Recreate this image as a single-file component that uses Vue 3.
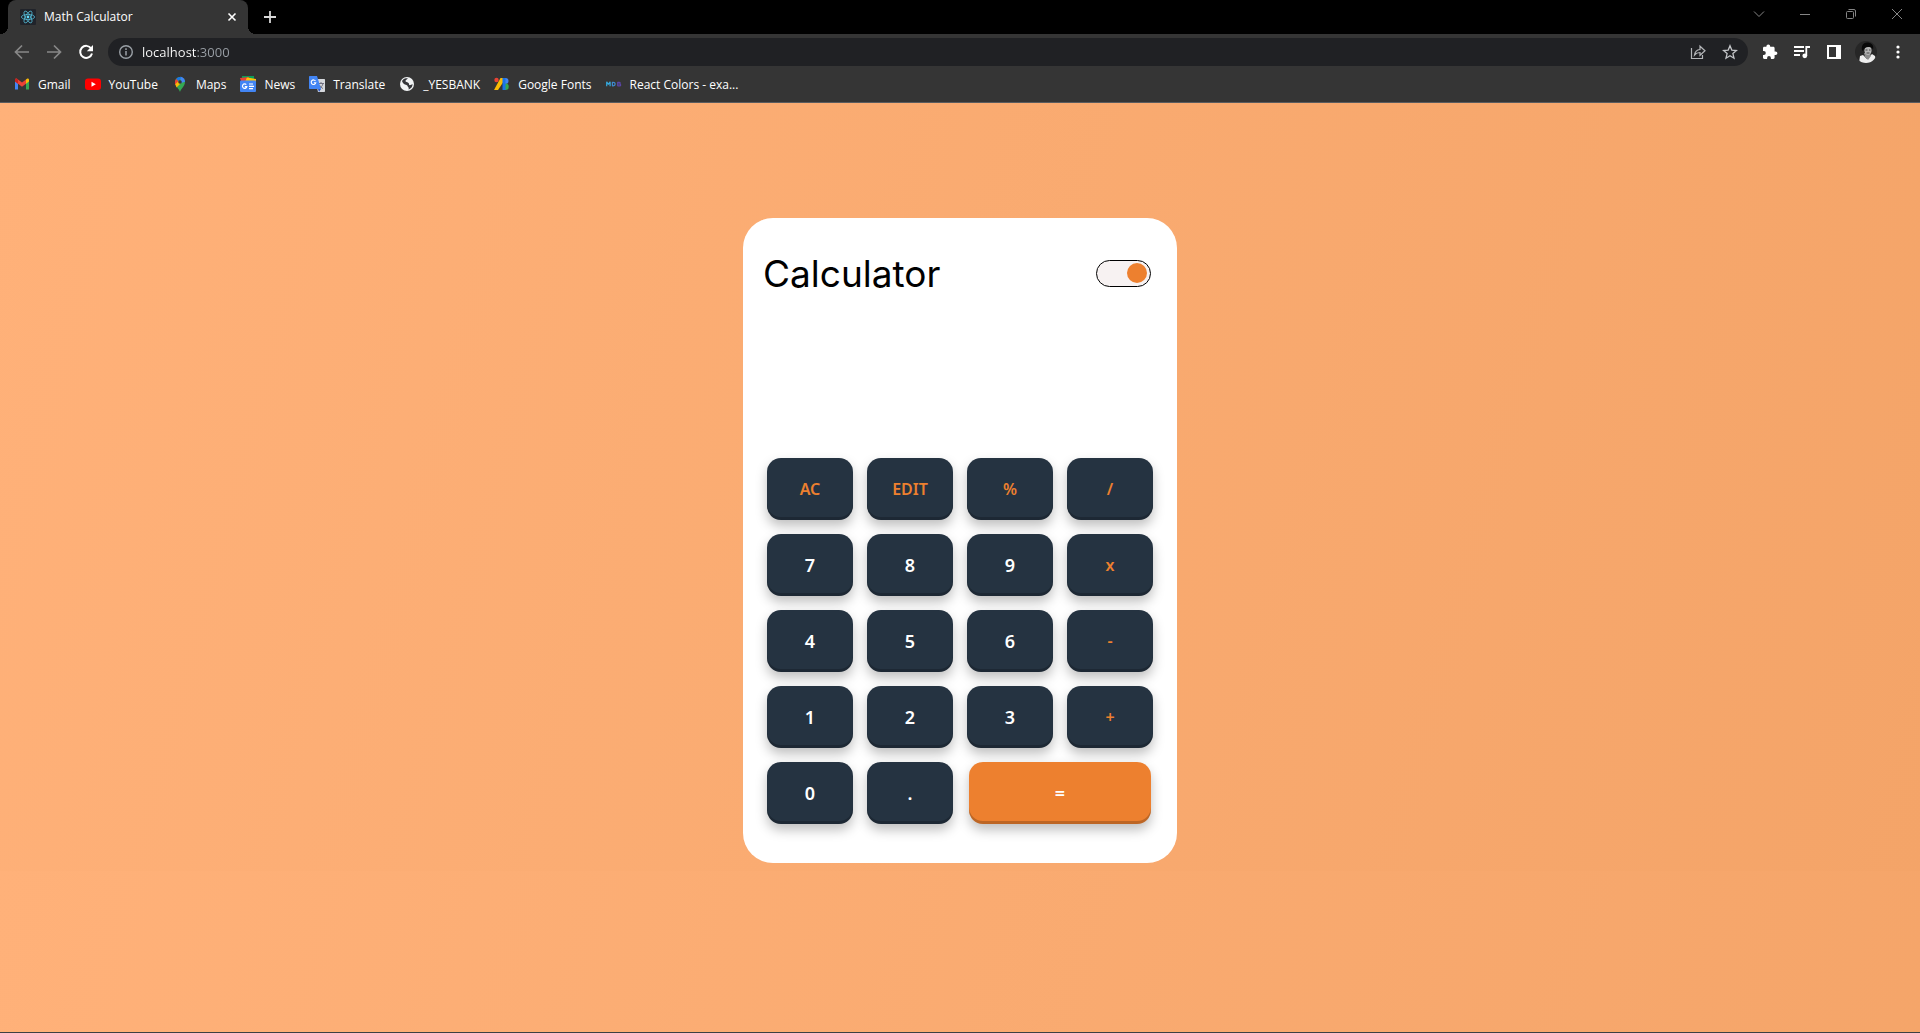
<script setup>
import { ref, computed } from 'vue'

const bookmarks = ['Gmail', 'YouTube', 'Maps', 'News', 'Translate', '_YESBANK', 'Google Fonts', 'React Colors - exa...']

const keys = [
  ['AC', 'op'], ['EDIT', 'op'], ['%', 'op'], ['/', 'op'],
  ['7', 'num'], ['8', 'num'], ['9', 'num'], ['x', 'op'],
  ['4', 'num'], ['5', 'num'], ['6', 'num'], ['-', 'op'],
  ['1', 'num'], ['2', 'num'], ['3', 'num'], ['+', 'op'],
  ['0', 'num'], ['.', 'num'], ['=', 'equals']
].map(([label, kind]) => ({ label, kind }))

const address = ref('localhost:3000')
const light = ref(true)
const entry = ref('')
const left = ref(0)
const pending = ref('')
const shown = computed(() => entry.value)

const apply = (a, b, op) => {
  if (op === '+') return a + b
  if (op === '-') return a - b
  if (op === 'x') return a * b
  if (op === '/') return a / b
  return a % b
}

function press({ label, kind }) {
  if (label === 'AC') {
    entry.value = ''
    pending.value = ''
  } else if (label === 'EDIT') {
    entry.value = entry.value.slice(0, -1)
  } else if (kind === 'num') {
    entry.value += label
  } else if (kind === 'equals') {
    if (pending.value) entry.value = String(apply(left.value, Number(entry.value), pending.value))
    pending.value = ''
  } else {
    left.value = Number(entry.value)
    pending.value = label
    entry.value = ''
  }
}
</script>

<template>
  <div class="window">
    <header class="browser">
      <div class="tabstrip">
        <div class="tab">
          <svg class="favicon" viewBox="0 0 16 16" aria-hidden="true">
            <rect width="16" height="16" rx="1" fill="#20232a" />
            <g fill="none" stroke="#53b8d3" stroke-width=".8">
              <ellipse cx="8" cy="8" rx="6.6" ry="2.6" />
              <ellipse cx="8" cy="8" rx="6.6" ry="2.6" transform="rotate(60 8 8)" />
              <ellipse cx="8" cy="8" rx="6.6" ry="2.6" transform="rotate(120 8 8)" />
            </g>
            <circle cx="8" cy="8" r="1.4" fill="#61dafb" />
          </svg>
          <span class="tab-title">Math Calculator</span>
          <button class="icon-btn" aria-label="Close tab">
            <svg width="16" height="16" viewBox="0 0 16 16"><path d="M4.500 4.500l7 7M11.500 4.500l-7 7" stroke="#fff" stroke-width="1.6" /></svg>
          </button>
        </div>
        <button class="icon-btn new-tab" aria-label="New tab">
          <svg width="16" height="16" viewBox="0 0 16 16"><path d="M8 2v12M2 8h12" stroke="#d8d8d8" stroke-width="1.8" /></svg>
        </button>
        <div class="window-controls">
          <button class="icon-btn" aria-label="Search tabs"><svg width="12" height="12" viewBox="0 0 12 12"><path d="M1 3.500l5 5 5-5" /></svg></button>
          <button class="icon-btn" aria-label="Minimize"><svg width="12" height="12" viewBox="0 0 12 12"><path d="M1 6.500h10" /></svg></button>
          <button class="icon-btn" aria-label="Restore"><svg width="12" height="12" viewBox="0 0 12 12"><rect x="1.500" y="3.500" width="7" height="7" rx="1" /><path d="M3.500 1.500h5.500a1.500 1.500 0 0 1 1.500 1.500v5.500" /></svg></button>
          <button class="icon-btn" aria-label="Close"><svg width="12" height="12" viewBox="0 0 12 12"><path d="M1 1l10 10M11 1L1 11" /></svg></button>
        </div>
      </div>

      <div class="toolbar">
        <nav class="nav-buttons">
          <button class="icon-btn" aria-label="Back"><svg width="16" height="16" viewBox="0 0 16 16"><path d="M15 8H2M8 1.500L1.500 8 8 14.500" stroke="#888" stroke-width="1.700" fill="none" /></svg></button>
          <button class="icon-btn" aria-label="Forward"><svg width="16" height="16" viewBox="0 0 16 16"><path d="M1 8h13M8 1.500L14.500 8 8 14.500" stroke="#888" stroke-width="1.700" fill="none" /></svg></button>
          <button class="icon-btn" aria-label="Reload"><svg width="16" height="16" viewBox="0 0 16 16"><path d="M13.200 4.500A6 6 0 1 0 14 9.500" stroke="#fff" stroke-width="2" fill="none" /><path d="M15 1v6.200H8.800z" fill="#fff" /></svg></button>
        </nav>
        <form class="omnibox" @submit.prevent>
          <button type="button" class="icon-btn" aria-label="Site information">
            <svg width="16" height="16" viewBox="0 0 16 16"><circle cx="8" cy="8" r="6.300" fill="none" stroke="#9aa0a6" stroke-width="1.400" /><path d="M8 7v4.500M8 4.300v1.700" stroke="#9aa0a6" stroke-width="1.500" /></svg>
          </button>
          <input v-model="address" class="address" type="text" aria-label="Address" />
          <button type="button" class="icon-btn" aria-label="Share">
            <svg width="16" height="16" viewBox="0 0 16 16" fill="none" stroke="#b4b6b9" stroke-width="1.200"><path d="M1.500 4v10.500h11V11" /><path d="M4.500 11c.5-3.500 2.500-5.300 5.500-5.500V2.200l5 4.600-5 4.500V8.500c-2.500 0-4 .7-5.500 2.500z" /></svg>
          </button>
          <button type="button" class="icon-btn" aria-label="Bookmark this page">
            <svg width="16" height="16" viewBox="0 0 16 16"><path d="M8 1.800l1.800 4.300 4.700.4-3.600 3.100 1.100 4.600L8 11.800l-4 2.400 1.100-4.600-3.600-3.100 4.700-.4z" fill="none" stroke="#c3c5c8" stroke-width="1.300" /></svg>
          </button>
        </form>
        <div class="actions">
          <button class="icon-btn" aria-label="Extensions"><svg width="16" height="16" viewBox="0 0 16 16"><path d="M13.600 7.500h-1V4.200c0-.8-.6-1.400-1.300-1.400H8.200V2.300a1.900 1.900 0 0 0-3.800 0v.5H2.300C1.500 2.800 1 3.400 1 4.200v2.700h.8a2 2 0 0 1 0 4H1v2.700c0 .8.500 1.400 1.300 1.400h2.800v-1a1.900 1.900 0 0 1 3.800 0v1h2.400c.7 0 1.300-.6 1.300-1.400v-2.500h1a1.800 1.800 0 0 0 0-3.600z" fill="#fff" /></svg></button>
          <button class="icon-btn" aria-label="Media"><svg width="16" height="16" viewBox="0 0 16 16"><path d="M0 3h10M0 7h10M0 11h6" stroke="#fff" stroke-width="1.800" /><circle cx="10.800" cy="11.800" r="2.400" fill="#fff" /><path d="M12.300 12V3H16" stroke="#fff" stroke-width="1.800" fill="none" /></svg></button>
          <button class="icon-btn" aria-label="Side panel"><svg width="16" height="16" viewBox="0 0 16 16"><path fill="#fff" fill-rule="evenodd" d="M1 1h14v14H1zM3 3v10h7V3z" /></svg></button>
          <button class="icon-btn profile" aria-label="Profile">
            <svg width="22" height="22" viewBox="0 0 22 22">
              <defs><clipPath id="face"><circle cx="11" cy="11" r="11" /></clipPath></defs>
              <g clip-path="url(#face)">
                <rect width="22" height="22" fill="#262626" />
                <path d="M4 22l1-7 3-1 4 4 5-5 3 2 2 7z" fill="#eee" />
                <path d="M9 12h6l1 3-3 4-3-3z" fill="#8c8c8c" />
                <ellipse cx="13" cy="9.500" rx="3.600" ry="4.600" fill="#b5b5b5" />
                <path d="M7 9C6 4 9 1 13 1.500s6 3 5 7c-1-2-3-2.500-5-2.500S9 7 8 10z" fill="#080808" />
                <path d="M10.500 9h2M14 9h1.500M11.500 12h3" stroke="#444" stroke-width="1" />
              </g>
            </svg>
          </button>
          <button class="icon-btn" aria-label="Menu"><svg width="16" height="16" viewBox="0 0 16 16" fill="#fff"><circle cx="8" cy="3" r="1.600" /><circle cx="8" cy="8" r="1.600" /><circle cx="8" cy="13" r="1.600" /></svg></button>
        </div>
      </div>

      <nav class="bookmarks">
        <a v-for="name in bookmarks" :key="name" href="#" class="bookmark">
          <svg width="16" height="16" viewBox="0 0 16 16" aria-hidden="true">
            <g v-if="name === 'Gmail'">
              <path d="M1 4v9.500h3V7z" fill="#4285f4" />
              <path d="M15 4v9.500h-3V7z" fill="#34a853" />
              <path d="M12 3.500L13 2.800c1-.6 2 0 2 1.200v1.500l-3 2.300z" fill="#fbbc04" />
              <path d="M1 5.500V4c0-1.200 1-1.800 2-1.200L8 6.500l4-3v4.300l-4 3-4-3z" fill="#ea4335" />
              <path d="M1 4v1.600l3 2.200V3.500l-1-.7C2 2.200 1 2.800 1 4z" fill="#c5221f" />
            </g>
            <g v-else-if="name === 'YouTube'">
              <rect y="2.500" width="16" height="11.500" rx="3" fill="#f00" />
              <path d="M6.500 5.800v5l4.300-2.500z" fill="#fff" />
            </g>
            <g v-else-if="name === 'Maps'">
              <path d="M8 16c-.6-3-5-5.500-5-10a5 5 0 0 1 10 0c0 4.500-4.400 7-5 10z" fill="#34a853" />
              <path d="M8 0.800a5 5 0 0 1 5 5L9 7z" fill="#4285f4" />
              <path d="M4.200 2.800L7 5.500 3.300 9C2.800 7.500 2.500 5 4.200 2.800z" fill="#ea4335" />
              <path d="M4.200 2.800A5 5 0 0 1 9.500 1.200L6.500 5z" fill="#1a73e8" />
              <path d="M3.300 8.200L6.500 5l2 2.500-4 4z" fill="#fbbc04" />
              <circle cx="8" cy="6" r="1.800" fill="#353535" />
            </g>
            <g v-else-if="name === 'News'">
              <path d="M2 0h12v5H2z" fill="#0c9d58" />
              <path d="M0 2l9-1 1 4H1z" fill="#ea4335" />
              <path d="M7 1.500l9 1.500V6H5z" fill="#ffc107" />
              <rect y="4.500" width="16" height="11.500" rx="1" fill="#4285f4" />
              <path d="M6.300 8.700a2.200 2.200 0 1 0 .5 1.900H4.800" fill="none" stroke="#fff" stroke-width="1.200" />
              <path d="M9 8h4M9 10.300h5M9 12.600h4" stroke="#fff" stroke-width="1.200" />
            </g>
            <g v-else-if="name === 'Translate'">
              <path d="M6 3h9c.6 0 1 .4 1 1v11c0 .6-.4 1-1 1H9z" fill="#d5d8dc" />
              <path d="M9 7.500h6M12 6v1.500M14 7.500c-.5 2.500-2 4-4 5M10.500 9c.8 1.700 2 2.800 3.500 3.500" stroke="#667" stroke-width=".9" fill="none" />
              <path d="M1 0h7l4 13H1c-.6 0-1-.4-1-1V1c0-.6.4-1 1-1z" fill="#4285f4" />
              <path d="M9 13h3l-2 3z" fill="#2a56c6" />
              <path d="M6.500 5a2.300 2.300 0 1 0 .3 1.700H4.800" fill="none" stroke="#fff" stroke-width="1.100" />
            </g>
            <g v-else-if="name === '_YESBANK'">
              <circle cx="8" cy="8" r="7" fill="#f1f3f4" />
              <path d="M3 5c2-3 4-2.500 6-3-1 2-2.500 1.500-2.500 3S10 6 10 8s2 1 3.500 0c.2 3-2 5-4 5.500 1-2-1-2.500-1-3.700C8 8.500 4 9 3 5z" fill="#35363a" />
            </g>
            <g v-else-if="name === 'Google Fonts'">
              <circle cx="2.500" cy="4" r="2.200" fill="#ea4335" />
              <path d="M6.500 2H10v3L4 14H0z" fill="#fbbc04" />
              <rect x="8.500" y="2" width="3.500" height="12" fill="#1a73e8" />
              <path d="M11.500 2a3 3 0 0 1 0 6z" fill="#4285f4" />
              <path d="M11.500 7.500a3.200 3.200 0 0 1 0 6.500z" fill="#34a853" />
            </g>
            <g v-else fill="none" stroke-width="1.200" stroke-linejoin="bevel">
              <path d="M.7 10.300V5.800l1.700 2.500L4.100 5.800v4.500" stroke="#35a8dc" />
              <path d="M6.400 6.300v3.500h.8c2.600 0 2.600-3.500 0-3.500z" stroke="#3d8bd0" />
              <path d="M11.700 6.300v3.500h1.600c1.900 0 1.900-1.800 0-1.800h-1.600 1.400c1.500 0 1.500-1.700 0-1.700z" stroke="#5b45a8" />
            </g>
          </svg>
          <span>{{ name }}</span>
        </a>
      </nav>
    </header>

    <main class="page">
      <section class="calculator">
        <div class="heading">
          <h1>Calculator</h1>
          <input v-model="light" class="switch" type="checkbox" aria-label="Light theme" />
        </div>
        <output class="display">{{ shown }}</output>
        <div class="keys">
          <button v-for="key in keys" :key="key.label" class="key" :class="key.kind" @click="press(key)">{{ key.label }}</button>
        </div>
      </section>
    </main>
  </div>
</template>

<style>
body {
  margin: 0;
}
</style>

<style scoped>
.window {
  display: flex;
  flex-direction: column;
  min-height: 100vh;
  box-sizing: border-box;
  border-bottom: 1px solid #3c4043;
  font-family: "Open Sans", "Noto Sans", sans-serif;
}
button,
input {
  font-family: inherit;
}
svg {
  display: block;
  flex: none;
}
.icon-btn {
  display: flex;
  padding: 0;
  border: 0;
  background: none;
}
.browser {
  background: #353535;
  color: #fff;
  border-bottom: 1px solid #5a5c5f;
}
.tabstrip {
  display: flex;
  height: 34px;
  padding-left: 8px;
  background: #000;
}
.tab {
  position: relative;
  display: flex;
  align-items: center;
  gap: 8px;
  box-sizing: border-box;
  width: 240px;
  padding: 0 8px 0 12px;
  border-radius: 8px 8px 0 0;
  background: #353535;
}
.tab::before,
.tab::after {
  content: "";
  position: absolute;
  bottom: 0;
  width: 8px;
  height: 8px;
}
.tab::before {
  right: 100%;
  background: radial-gradient(circle at 0 0, #000 8px, #353535 8px);
}
.tab::after {
  left: 100%;
  background: radial-gradient(circle at 100% 0, #000 8px, #353535 8px);
}
.favicon {
  width: 16px;
  height: 16px;
}
.tab-title {
  flex: 1;
  font-size: 12px;
  line-height: 16px;
}
.new-tab {
  align-items: center;
  margin-left: 14px;
}
.window-controls {
  display: flex;
  gap: 34px;
  margin: 8px 17px 0 auto;
}
.window-controls svg {
  fill: none;
  stroke: #858585;
  stroke-width: 1;
}
.toolbar {
  display: flex;
  align-items: center;
  gap: 14px;
  padding: 4px 14px;
}
.nav-buttons {
  display: flex;
  gap: 16px;
}
.omnibox {
  display: flex;
  flex: 1;
  align-items: center;
  gap: 16px;
  height: 28px;
  padding: 0 10px;
  border-radius: 14px;
  background: #202124;
}
.address {
  flex: 1;
  min-width: 0;
  margin-left: -8px;
  padding: 0;
  border: 0;
  outline: 0;
  font-size: 13px;
  color: transparent;
  background: linear-gradient(90deg, #fff 55px, #9aa0a6 55px);
  -webkit-background-clip: text;
  background-clip: text;
}
.actions {
  display: flex;
  align-items: center;
  gap: 16px;
}
.profile {
  margin: 0 -3px;
}
.bookmarks {
  display: flex;
  align-items: center;
  gap: 14px;
  box-sizing: border-box;
  height: 32px;
  padding: 0 14px 4px;
}
.bookmark {
  display: flex;
  align-items: center;
  gap: 8px;
  font-size: 12px;
  color: #fff;
  white-space: nowrap;
  text-decoration: none;
}
.page {
  flex: 1;
  padding: 115px 16px 16px;
  background: linear-gradient(105deg, #ffb179, #f4a468) 0 0 / 100% 768px;
}
.calculator {
  box-sizing: border-box;
  width: 434px;
  margin: 0 auto;
  padding: 28px 24px 39px;
  border-radius: 30px;
  background: #fff;
}
.heading {
  display: flex;
  align-items: center;
  justify-content: space-between;
  height: 54px;
  padding: 0 2px 0 0;
  margin-left: -4px;
}
h1 {
  margin: 0;
  font: 400 37px Inter, sans-serif;
  color: #000;
}
.switch {
  display: flex;
  align-items: center;
  justify-content: flex-end;
  appearance: none;
  box-sizing: border-box;
  width: 55px;
  height: 27px;
  margin: 0;
  padding: 0 3px;
  border: 1px solid #000;
  border-radius: 14px;
  background: #f7f2f2;
}
.switch:not(:checked) {
  justify-content: flex-start;
}
.switch::before {
  content: "";
  width: 20px;
  height: 20px;
  border-radius: 50%;
  background: #ed802f;
}
.display {
  display: block;
  box-sizing: border-box;
  height: 158px;
  padding: 96px 8px 0;
  font-size: 32px;
  text-align: right;
}
.keys {
  display: grid;
  grid-template-columns: repeat(4, 1fr);
  gap: 14px;
}
.key {
  height: 62px;
  padding: 0;
  border: 0;
  border-radius: 14px;
  background: #253341;
  box-shadow: 0 6px 12px rgba(0, 0, 0, 0.25), inset 0 -3px 0 rgba(0, 0, 0, 0.2);
  color: #fff;
  font-family: "Noto Sans", sans-serif;
  font-size: 18px;
  font-weight: 600;
}
.op {
  color: #ed802f;
  font-size: 16px;
}
.equals {
  grid-column: span 2;
  margin: 0 2px;
  background: #ed802f;
}
</style>
